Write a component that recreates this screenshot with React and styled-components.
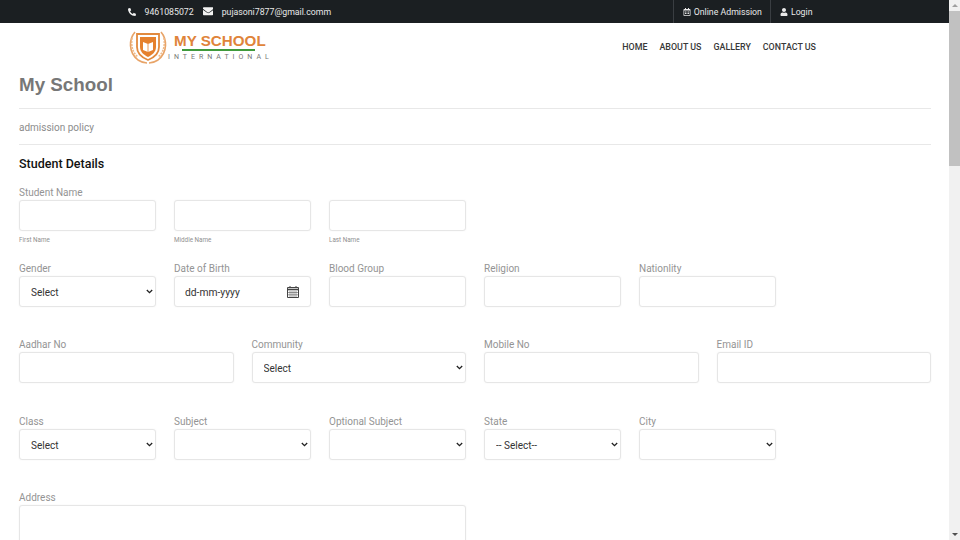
import React from "react";
import styled, { createGlobalStyle } from "styled-components";
import { FaPhoneAlt, FaEnvelope, FaRegCalendarAlt, FaUser } from "react-icons/fa";

const GlobalStyle = createGlobalStyle`
  html, body { height: 100%; overflow: hidden; }
  body {
    margin: 0;
    background: #fff;
    font-family: Roboto, "Liberation Sans", sans-serif;
  }
  #root { width: 949px; }
`;

const chevron =
  "url(\"data:image/svg+xml,%3Csvg xmlns='http://www.w3.org/2000/svg' width='7' height='5' viewBox='0 0 7 5'%3E%3Cpath d='M.8 1l2.7 2.7L6.2 1' fill='none' stroke='%23222' stroke-width='1.3'/%3E%3C/svg%3E\")";

const row1 = [
  { label: "Student Name", hint: "First Name", span: 2 },
  { label: "\u00a0", hint: "Middle Name", span: 2 },
  { label: "\u00a0", hint: "Last Name", span: 2 },
];

const row2 = [
  { label: "Gender", type: "select", value: "Select", span: 2 },
  { label: "Date of Birth", type: "date", span: 2 },
  { label: "Blood Group", span: 2 },
  { label: "Religion", span: 2 },
  { label: "Nationlity", span: 2 },
];

const row3 = [
  { label: "Aadhar No", span: 3 },
  { label: "Community", type: "select", value: "Select", span: 3 },
  { label: "Mobile No", span: 3 },
  { label: "Email ID", span: 3 },
];

const row4 = [
  { label: "Class", type: "select", value: "Select", span: 2 },
  { label: "Subject", type: "select", value: "", span: 2 },
  { label: "Optional Subject", type: "select", value: "", span: 2 },
  { label: "State", type: "select", value: "-- Select--", span: 2 },
  { label: "City", type: "select", value: "", span: 2 },
];

const Logo = () => (
  <LogoWrap>
    <svg width="40" height="34" viewBox="0 0 40 34" fill="none">
      <path d="M7 2C1 9 0 22 10 30c3 2 6 3 9 3" stroke="#e8a468" strokeWidth="1.6" />
      <path d="M33 2c6 7 7 20-3 28-3 2-6 3-9 3" stroke="#e8a468" strokeWidth="1.6" />
      <path d="M4 8c-1 7 0 14 6 19" stroke="#eeb988" strokeWidth="1.6" strokeDasharray="2 1" />
      <path d="M36 8c1 7 0 14-6 19" stroke="#eeb988" strokeWidth="1.6" strokeDasharray="2 1" />
      <path d="M9 4h22v13c0 7-6 11-11 13C15 28 9 24 9 17z" fill="#fff" stroke="#e28a3e" strokeWidth="1.8" />
      <path d="M12 7h16v10c0 5-4 8-8 10-4-2-8-5-8-10z" fill="#e5812e" />
      <path d="M15 12l5 2 5-2v8l-5 2-5-2z" fill="#fff" />
      <path d="M20 14v8" stroke="#e5812e" strokeWidth=".8" />
    </svg>
    <LogoText>
      <LogoName>MY SCHOOL</LogoName>
      <LogoRule />
      <LogoSub>INTERNATIONAL</LogoSub>
    </LogoText>
  </LogoWrap>
);

// the browser's date picker glyph
const CalendarIcon = () => (
  <svg width="14" height="14" viewBox="0 0 14 14" fill="none" stroke="#444">
    <path d="M1.5 2.5h11v10h-11z" />
    <path d="M1 4.5h12" strokeWidth="1.6" />
    <path d="M4 1v2M10 1v2" />
    <path d="M2 7.5h10M2 9.8h10M4 6v6M6 6v6M8 6v6M10 6v6" strokeWidth=".5" />
  </svg>
);

const Field = ({ label, hint, type, value, span }) => (
  <Cell $span={span}>
    <Label>{label}</Label>
    {type === "select" ? (
      <Select defaultValue={value}>
        <option value={value}>{value}</option>
      </Select>
    ) : type === "date" ? (
      <DateBox>
        <span>dd-mm-yyyy</span>
        <CalendarIcon />
      </DateBox>
    ) : (
      <Input type="text" />
    )}
    {hint && <Hint>{hint}</Hint>}
  </Cell>
);

const App = () => {
  return (
    <>
      <GlobalStyle />
      <TopBar>
        <TopInner>
          <Contact>
            <FaPhoneAlt />
            <ContactText>9461085072</ContactText>
            <FaEnvelope />
            <ContactText>pujasoni7877@gmail.comm</ContactText>
          </Contact>
          <TopLinks>
            <TopLink href="#">
              <FaRegCalendarAlt />
              Online Admission
            </TopLink>
            <TopLink href="#">
              <FaUser />
              Login
            </TopLink>
          </TopLinks>
        </TopInner>
      </TopBar>
      <Header>
        <HeaderInner>
          <Logo />
          <Nav>
            <NavLink href="#">HOME</NavLink>
            <NavLink href="#">ABOUT US</NavLink>
            <NavLink href="#">GALLERY</NavLink>
            <NavLink href="#">CONTACT US</NavLink>
          </Nav>
        </HeaderInner>
      </Header>
      <Main>
        <Title>My School</Title>
        <Policy>admission policy</Policy>
        <SectionTitle>Student Details</SectionTitle>
        <FormRow $gap={17}>
          {row1.map((f, i) => (
            <Field key={i} {...f} />
          ))}
        </FormRow>
        <FormRow $gap={32}>
          {row2.map((f) => (
            <Field key={f.label} {...f} />
          ))}
        </FormRow>
        <FormRow $gap={33}>
          {row3.map((f) => (
            <Field key={f.label} {...f} />
          ))}
        </FormRow>
        <FormRow $gap={32}>
          {row4.map((f) => (
            <Field key={f.label} {...f} />
          ))}
        </FormRow>
        <FormRow $gap={0}>
          <Cell $span={6}>
            <Label>Address</Label>
            <TextArea />
          </Cell>
        </FormRow>
      </Main>
      <ScrollTrack>
        <ScrollArrow $up />
        <ScrollThumb />
        <ScrollArrow />
      </ScrollTrack>
    </>
  );
};

const TopBar = styled.div`
  height: 23px;
  background: #1b1f22;
  color: #e8e8e8;
  font-size: 8.75px;
`;

const TopInner = styled.div`
  width: 693px;
  height: 100%;
  margin: 0 auto;
  display: flex;
  justify-content: space-between;
`;

const Contact = styled.div`
  display: flex;
  align-items: center;
  svg {
    font-size: 8px;
    color: #f2f2f2;
  }
  svg:nth-of-type(2) {
    font-size: 10.5px;
  }
`;

const ContactText = styled.span`
  margin: 0 9px 0 8.5px;
`;

const TopLinks = styled.div`
  display: flex;
`;

const TopLink = styled.a`
  display: flex;
  align-items: center;
  gap: 3px;
  padding: 0 8.5px;
  color: #e8e8e8;
  text-decoration: none;
  border-left: 1px solid #3a3e42;
  svg {
    font-size: 8px;
  }
`;

const Header = styled.header`
  height: 47px;
`;

const HeaderInner = styled.div`
  width: 693px;
  height: 100%;
  margin: 0 auto;
  display: flex;
  justify-content: space-between;
  align-items: center;
`;

const LogoWrap = styled.div`
  display: flex;
  align-items: center;
  gap: 0;
`;

const LogoText = styled.div`
  display: flex;
  flex-direction: column;
`;

const LogoName = styled.div`
  font-family: "Liberation Sans", sans-serif;
  font-weight: 700;
  font-size: 15.2px;
  line-height: 15px;
  color: #e0843a;
  margin-left: 6px;
`;

const LogoRule = styled.div`
  width: 73px;
  height: 2px;
  margin: 1px 0 2px 14px;
  background: #3f9a3c;
`;

const LogoSub = styled.div`
  font-size: 7px;
  line-height: 8px;
  letter-spacing: 4px;
  color: #777;
`;

const Nav = styled.nav`
  display: flex;
  gap: 12px;
  margin: 1px 5px 0 0;
`;

const NavLink = styled.a`
  font-size: 8.9px;
  font-weight: 500;
  color: #383838;
  text-decoration: none;
`;

const Main = styled.main`
  padding: 0 18px 60px 19px;
`;

const Title = styled.h1`
  margin: 0;
  padding: 3px 0 11px;
  font-family: "Liberation Sans", sans-serif;
  font-size: 18.8px;
  line-height: 24px;
  font-weight: 700;
  color: #777;
  border-bottom: 1px solid #e8e8e8;
`;

const Policy = styled.div`
  height: 35px;
  font-size: 10px;
  line-height: 38px;
  color: #8c8c8c;
  border-bottom: 1px solid #e8e8e8;
`;

const SectionTitle = styled.h3`
  margin: 11px 0 15px;
  font-size: 12.5px;
  line-height: 16px;
  font-weight: 500;
  color: #111;
`;

const FormRow = styled.div`
  display: grid;
  grid-template-columns: repeat(12, 1fr);
  column-gap: 18px;
  margin-bottom: ${(p) => p.$gap}px;
`;

const Cell = styled.div`
  grid-column: span ${(p) => p.$span};
  display: flex;
  flex-direction: column;
`;

const Label = styled.label`
  height: 12px;
  margin-bottom: 1px;
  font-size: 10px;
  line-height: 12px;
  color: #949494;
`;

const Hint = styled.small`
  margin-top: 5px;
  height: 10px;
  font-size: 6.3px;
  line-height: 8px;
  color: #909090;
`;

const boxStyle = `
  box-sizing: border-box;
  width: 100%;
  height: 31px;
  background-color: #fff;
  border: 1px solid #e6e6e6;
  border-radius: 3px;
  box-shadow: 0 0 2px rgba(0, 0, 0, 0.05);
  font-family: Roboto, sans-serif;
  font-size: 10px;
  color: #333;
  outline: none;
`;

const Input = styled.input`
  ${boxStyle}
  padding: 0 10px;
`;

const Select = styled.select`
  ${boxStyle}
  appearance: none;
  padding: 2px 12px 0 11px;
  background-image: ${chevron};
  background-repeat: no-repeat;
  background-position: right 2px center;
`;

const DateBox = styled.div`
  ${boxStyle}
  font-size: 10.3px;
  display: flex;
  align-items: center;
  justify-content: space-between;
  padding: 1px 10px 0;
`;

const TextArea = styled.textarea`
  ${boxStyle}
  height: 62px;
  resize: none;
`;

const ScrollTrack = styled.div`
  position: fixed;
  top: 0;
  right: 0;
  bottom: 0;
  width: 11px;
  background: #f1f1f1;
  display: flex;
  flex-direction: column;
  justify-content: space-between;
`;

const ScrollArrow = styled.div`
  height: 11px;
  flex: none;
  display: flex;
  align-items: center;
  justify-content: center;
  &::before {
    content: "";
    border-left: 3px solid transparent;
    border-right: 3px solid transparent;
    ${(p) => (p.$up ? "border-bottom: 3px solid #a0a0a0;" : "border-top: 3px solid #505050;")}
  }
`;

const ScrollThumb = styled.div`
  height: 155px;
  flex: none;
  margin-bottom: auto;
  background: #c1c1c1;
`;

export default App;
